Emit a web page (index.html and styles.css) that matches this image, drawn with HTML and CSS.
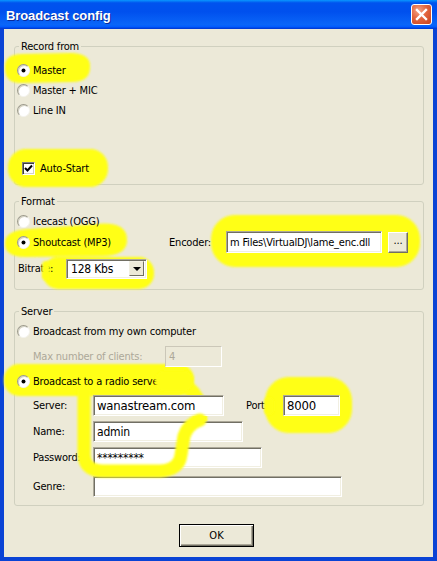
FILE: index.html
```html
<!DOCTYPE html>
<html lang="en">
  <head>
    <meta charset="UTF-8" />
    <title>Broadcast config</title>
    <link rel="stylesheet" href="styles.css">
  </head>
  <body>
    <div class="window">
      <div class="titlebar">
        <span class="title">Broadcast config</span>
        <span class="close">
          <svg width="19" height="19" viewBox="0 0 19 19">
            <path d="M5 5 L14 14 M14 5 L5 14" stroke="#fff" stroke-width="2.4" stroke-linecap="square" />
          </svg>
        </span>
      </div>

      <!-- highlighter strokes drawn behind the controls -->
      <svg class="marks under" width="437" height="561">
        <defs>
          <filter id="softA"><feGaussianBlur stdDeviation="0.9" /></filter>
        </defs>
        <g fill="#ffff14" stroke="#ffff14" filter="url(#softA)">
          <path d="M5 68 Q4 54 22 54 L72 53 Q91 54 90 67 Q90 82 72 82 L20 83 Q5 83 5 68 Z" stroke="none" />
          <rect x="8" y="149" width="100" height="38" rx="18" stroke="none" />
          <path d="M5 244 Q4 230 30 229 L96 224 Q127 221 127 240 Q127 256 102 256 L26 257 Q5 257 5 244 Z" stroke="none" />
          <rect x="43" y="257" width="111" height="32" rx="15" stroke="none" />
          <rect x="211" y="215" width="209" height="52" rx="24" stroke="none" />
          <rect x="4" y="364" width="190" height="32" rx="15" stroke="none" />
          <path d="M182 384 Q202 394 200 420" fill="none" stroke-width="14" stroke-linecap="round" />
          <rect x="265" y="377" width="87" height="56" rx="24" stroke="none" />
        </g>
      </svg>

      <div class="client">
        <fieldset class="group record">
          <legend>Record from</legend>
          <div class="row"><span class="radio on"></span>Master</div>
          <div class="row"><span class="radio"></span>Master + MIC</div>
          <div class="row"><span class="radio"></span>Line IN</div>
          <div class="row autostart">
            <span class="check">
              <svg width="11" height="11" viewBox="0 0 11 11">
                <path d="M2 5 L4.5 7.5 L9 2.5" fill="none" stroke="#000" stroke-width="2" />
              </svg>
            </span>
            Auto-Start
          </div>
        </fieldset>

        <fieldset class="group format">
          <legend>Format</legend>
          <div class="row"><span class="radio"></span>Icecast (OGG)</div>
          <div class="row tall">
            <span class="opt"><span class="radio on"></span>Shoutcast (MP3)</span>
            <span class="enc-label">Encoder:</span>
            <span class="field enc">m Files\VirtualDJ\lame_enc.dll</span>
            <span class="btn dots">...</span>
          </div>
          <div class="row bitrate">
            <span class="bit-label">Bitrate:</span>
            <span class="combo">
              <span class="combo-text">128 Kbs</span>
              <span class="combo-btn"><span class="arrow"></span></span>
            </span>
          </div>
        </fieldset>

        <fieldset class="group server">
          <legend>Server</legend>
          <div class="row"><span class="radio"></span>Broadcast from my own computer</div>
          <div class="row fieldrow clients">
            <span class="muted">Max number of clients:</span>
            <span class="field disabled w-clients">4</span>
          </div>
          <div class="row radio-server"><span class="radio on"></span>Broadcast to a radio server</div>
          <div class="row fieldrow srv">
            <span class="lbl">Server:</span>
            <span class="field w-server">wanastream.com</span>
            <span class="port-label">Port:</span>
            <span class="field w-port">8000</span>
          </div>
          <div class="row fieldrow gap5">
            <span class="lbl">Name:</span>
            <span class="field w-name">admin</span>
          </div>
          <div class="row fieldrow gap5">
            <span class="lbl">Password:</span>
            <span class="field w-pass">*********</span>
          </div>
          <div class="row fieldrow genre">
            <span class="lbl">Genre:</span>
            <span class="field w-genre"></span>
          </div>
        </fieldset>

        <div class="footer">
          <button class="btn ok">OK</button>
        </div>
      </div>

      <!-- highlighter strokes that cross over text and boxes -->
      <svg class="marks over" width="437" height="561">
        <defs>
          <filter id="softB"><feGaussianBlur stdDeviation="0.9" /></filter>
        </defs>
        <g fill="#ffff14" stroke="#ffff14" filter="url(#softB)">
          <path d="M84 392 L84 455 Q85 471 103 471 L160 471 Q179 470 181 455 L184 436 Q188 424 200 420" fill="none" stroke-width="13" stroke-linecap="round" stroke-linejoin="round" />
          <rect x="155" y="371" width="38" height="20" rx="9" stroke="none" />
          <rect x="42" y="261" width="8" height="19" rx="4" stroke="none" />
          <rect x="264" y="397" width="10" height="18" rx="5" stroke="none" />
        </g>
      </svg>
    </div>
  </body>
</html>
```

FILE: styles.css
```css
* {
  box-sizing: border-box;
}
body {
  margin: 0;
  background: #fff;
  font-family: "DejaVu Sans Condensed", "DejaVu Sans", sans-serif;
  font-size: 11px;
  letter-spacing: -0.2px;
  color: #000;
}
.window {
  position: relative;
  z-index: 0;
  width: 437px;
  height: 561px;
  background: #0a43d5;
  display: flex;
  flex-direction: column;
}
.titlebar {
  height: 29px;
  flex: none;
  display: flex;
  align-items: center;
  justify-content: space-between;
  padding: 0 5px 0 6px;
  background: linear-gradient(180deg, #0997ff, #0053ee 10%, #0050ee 40%, #0a66f8 85%, #005bff 93%, #003dd7 97%, #003dd7);
}
.title {
  color: #fff;
  font: bold 13px "Liberation Sans", sans-serif;
  letter-spacing: -0.1px;
  text-shadow: 1px 1px 0 #0a2a9a;
  padding-top: 1px;
}
.close {
  width: 21px;
  height: 21px;
  border: 1px solid #fff;
  border-radius: 3px;
  background: radial-gradient(circle at 35% 30%, #f5a486, #e2653e 45%, #c8411c 100%);
  display: flex;
  align-items: center;
  justify-content: center;
}
.client {
  flex: 1;
  margin: 0 4px 4px 4px;
  background: #ece9d8;
  padding: 11px 9px 0 10px;
}

.marks {
  position: absolute;
  top: 0;
  left: 0;
  pointer-events: none;
}
.marks.under {
  z-index: 1;
}
.marks.over {
  z-index: 3;
}

/* group boxes */
.group {
  margin: 0;
  padding: 7px 0 6px 2px;
  border: 1px solid #d0d0bf;
  border-radius: 3px;
  min-width: 0;
}
.group legend {
  margin-left: 2px;
  padding: 0 2px;
  line-height: 13px;
  font-size: 11px;
}
.format {
  margin-top: 10px;
  padding: 3px 0 10px 2px;
}
.server {
  margin-top: 15px;
  padding: 3px 0 8px 2px;
}

.row {
  position: relative;
  z-index: 2;
  display: flex;
  align-items: center;
  height: 20px;
  white-space: nowrap;
}
.row.tall {
  height: 22px;
}
.autostart {
  margin-top: 38px;
  padding-left: 5px;
}
.bitrate {
  margin-top: 5px;
  height: 21px;
  padding-left: 1px;
}
.fieldrow {
  height: 21px;
  margin-top: 4px;
  padding-left: 16px;
}
.clients {
  margin-top: 5px;
}
.radio-server {
  margin-top: 4px;
}
.gap5 {
  margin-top: 5px;
}
.genre {
  margin-top: 8px;
}

/* radio and check */
.radio {
  position: relative;
  width: 13px;
  height: 13px;
  margin-right: 3px;
  border-radius: 50%;
  background: #fff;
  border: 1px solid;
  border-color: #9c9a8c #f4f3ee #f4f3ee #9c9a8c;
  box-shadow: inset 1px 1px 0 #d6d3c4;
  flex: none;
}
.radio.on::after {
  content: "";
  position: absolute;
  left: 4px;
  top: 4px;
  width: 3px;
  height: 3px;
  border-radius: 50%;
  background: #000;
  box-shadow: 0 0 0 0.5px #000;
}
.check {
  width: 13px;
  height: 13px;
  margin-right: 5px;
  background: #fff;
  border: 1px solid;
  border-color: #808080 #fff #fff #808080;
  box-shadow: inset 1px 1px 0 #404040, inset -1px -1px 0 #d4d0c8;
  display: flex;
  align-items: center;
  justify-content: center;
  flex: none;
}

/* text boxes */
.field {
  height: 21px;
  display: flex;
  align-items: center;
  padding: 0 3px;
  background: #fff;
  border: 1px solid;
  border-color: #aca899 #fff #fff #aca899;
  box-shadow: inset 1px 1px 0 #716f64, inset -1px -1px 0 #f1efe2;
  font-family: "DejaVu Sans Condensed", sans-serif;
  overflow: hidden;
  flex: none;
}
.field.disabled {
  background: #ece9d8;
  color: #aca899;
  border-color: #cbc7b8 #fff #fff #cbc7b8;
  box-shadow: none;
}
.muted {
  color: #aca899;
  width: 132px;
}
.lbl {
  width: 60px;
}
.opt {
  display: flex;
  align-items: center;
  width: 152px;
}
.enc-label {
  width: 57px;
}
.enc {
  width: 156px;
  height: 22px;
  font-size: 11px;
}
.w-clients { width: 57px; }
.w-server { width: 131px; font-size: 13px; }
.w-port { width: 57px; font-size: 13px; }
.w-name { width: 150px; font-size: 12px; }
.w-pass { width: 169px; font-size: 12px; }
.w-genre { width: 249px; }
.port-label {
  width: 37px;
  margin-left: 22px;
}

/* buttons */
.btn {
  background: #ece9d8;
  border: 1px solid;
  border-color: #fff #716f64 #716f64 #fff;
  box-shadow: inset -1px -1px 0 #aca899;
  font-family: "DejaVu Sans Condensed", sans-serif;
  font-size: 11px;
  color: #000;
  display: flex;
  align-items: center;
  justify-content: center;
}
.dots {
  width: 20px;
  height: 21px;
  margin-left: 6px;
  padding-bottom: 3px;
}

/* combo box */
.bit-label {
  width: 48px;
}
.combo {
  width: 81px;
  height: 20px;
  display: flex;
  align-items: center;
  justify-content: space-between;
  background: #fff;
  border: 1px solid;
  border-color: #aca899 #fff #fff #aca899;
  box-shadow: inset 1px 1px 0 #716f64, inset -1px -1px 0 #f1efe2;
  padding: 2px 2px 2px 4px;
}
.combo-text {
  font-size: 12px;
}
.combo-btn {
  width: 15px;
  height: 15px;
  background: #ece9d8;
  border: 1px solid;
  border-color: #f1efe2 #716f64 #716f64 #f1efe2;
  display: flex;
  align-items: center;
  justify-content: center;
}
.arrow {
  width: 0;
  height: 0;
  border-left: 4px solid transparent;
  border-right: 4px solid transparent;
  border-top: 4px solid #000;
}

.footer {
  margin-top: 18px;
  display: flex;
  justify-content: center;
  padding-right: 5px;
}
.ok {
  width: 75px;
  height: 23px;
  border-color: #000;
  box-shadow: inset 1px 1px 0 #fff, inset -1px -1px 0 #716f64, inset -2px -2px 0 #aca899;
}
```
